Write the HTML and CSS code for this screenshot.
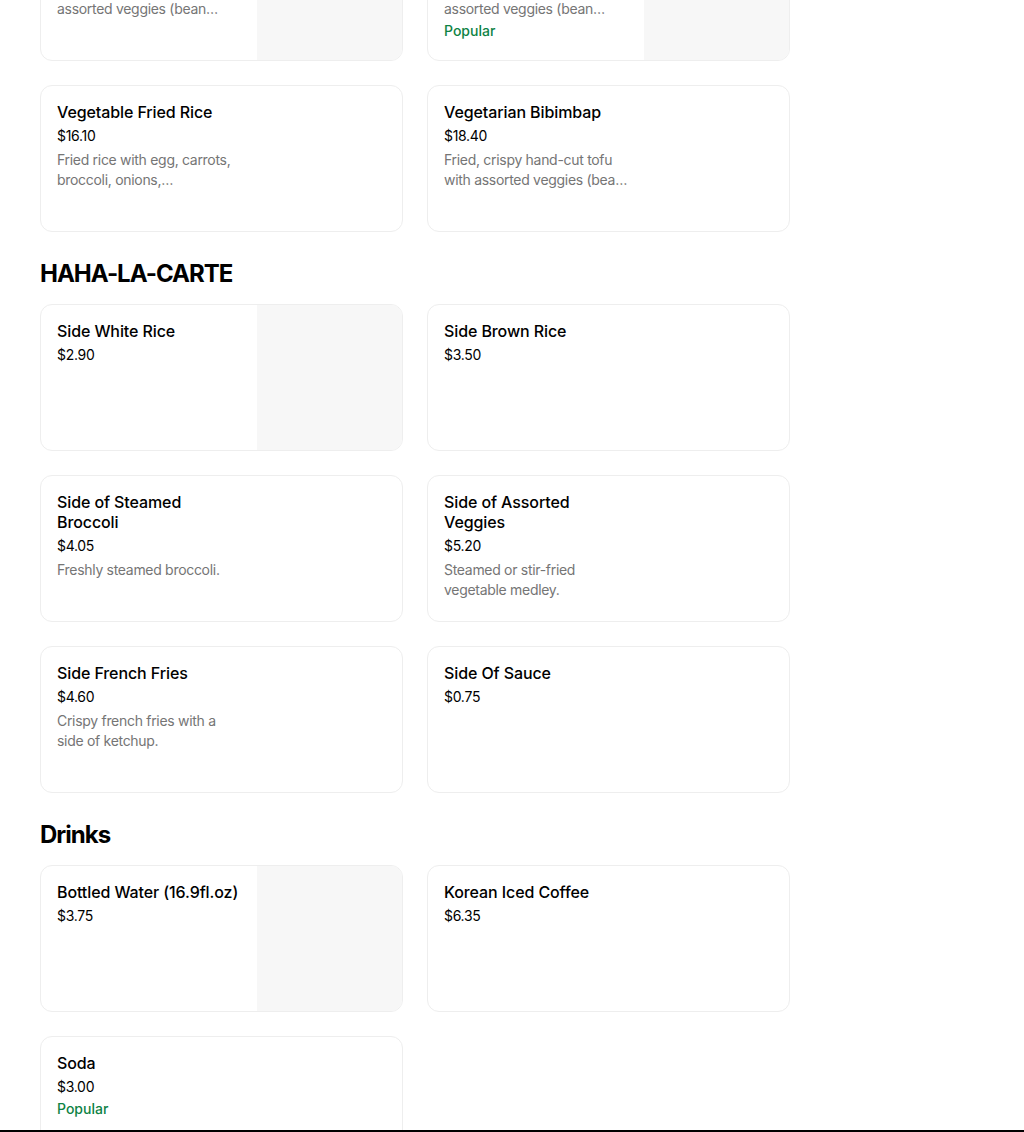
FILE: index.html
```html
<!DOCTYPE html>
<html lang="en">
  <head>
    <meta charset="UTF-8" />
    <meta name="viewport" content="width=device-width, initial-scale=1.0" />
    <title>Menu</title>
    <link rel="stylesheet" href="styles.css">
  </head>
  <body>
    <main class="menu">
      <section class="section">
        <div class="grid">
          <div class="card">
            <div class="info">
              <h4 class="name">Spicy Tofu Bowl</h4>
              <p class="price">$17.25</p>
              <p class="desc">Spicy tofu over rice, with assorted veggies (bean…</p>
            </div>
            <div class="thumb"></div>
          </div>
          <div class="card">
            <div class="info">
              <h4 class="name">Tofu Bibimbap</h4>
              <p class="price">$18.40</p>
              <p class="desc">Soft tofu over rice, with assorted veggies (bean…</p>
              <p class="tag">Popular</p>
            </div>
            <div class="thumb"></div>
          </div>
          <div class="card">
            <div class="info">
              <h4 class="name">Vegetable Fried Rice</h4>
              <p class="price">$16.10</p>
              <p class="desc">Fried rice with egg, carrots, broccoli, onions,…</p>
            </div>
          </div>
          <div class="card">
            <div class="info">
              <h4 class="name">Vegetarian Bibimbap</h4>
              <p class="price">$18.40</p>
              <p class="desc">Fried, crispy hand-cut tofu with assorted veggies (bea…</p>
            </div>
          </div>
        </div>
      </section>

      <section class="section">
        <h2 class="section-title">HAHA-LA-CARTE</h2>
        <div class="grid">
          <div class="card">
            <div class="info">
              <h4 class="name">Side White Rice</h4>
              <p class="price">$2.90</p>
            </div>
            <div class="thumb"></div>
          </div>
          <div class="card">
            <div class="info">
              <h4 class="name">Side Brown Rice</h4>
              <p class="price">$3.50</p>
            </div>
          </div>
          <div class="card">
            <div class="info">
              <h4 class="name">Side of Steamed Broccoli</h4>
              <p class="price">$4.05</p>
              <p class="desc">Freshly steamed broccoli.</p>
            </div>
          </div>
          <div class="card">
            <div class="info">
              <h4 class="name">Side of Assorted Veggies</h4>
              <p class="price">$5.20</p>
              <p class="desc">Steamed or stir-fried vegetable medley.</p>
            </div>
          </div>
          <div class="card">
            <div class="info">
              <h4 class="name">Side French Fries</h4>
              <p class="price">$4.60</p>
              <p class="desc">Crispy french fries with a side of ketchup.</p>
            </div>
          </div>
          <div class="card">
            <div class="info">
              <h4 class="name">Side Of Sauce</h4>
              <p class="price">$0.75</p>
            </div>
          </div>
        </div>
      </section>

      <section class="section">
        <h2 class="section-title">Drinks</h2>
        <div class="grid">
          <div class="card">
            <div class="info">
              <h4 class="name">Bottled Water (16.9fl.oz)</h4>
              <p class="price">$3.75</p>
            </div>
            <div class="thumb"></div>
          </div>
          <div class="card">
            <div class="info">
              <h4 class="name">Korean Iced Coffee</h4>
              <p class="price">$6.35</p>
            </div>
          </div>
          <div class="card">
            <div class="info">
              <h4 class="name">Soda</h4>
              <p class="price">$3.00</p>
              <p class="tag">Popular</p>
            </div>
          </div>
        </div>
      </section>
    </main>
    <div class="bottom-bar"></div>
  </body>
</html>
```

FILE: styles.css
```css
* {
  padding: 0;
  margin: 0;
  box-sizing: border-box;
}
html {
  font-size: 16px;
  font-family: Inter, 'Noto Sans', sans-serif;
  color: #000;
  background-color: #fff;
}
body {
  background-color: #fff;
  min-height: 100vh;
  overflow: hidden;
}
.menu {
  width: 790px;
  padding-left: 40px;
  margin-top: -86px;
}
.section + .section {
  margin-top: 24px;
}
.section-title {
  font-size: 24px;
  line-height: 36px;
  font-weight: 700;
  letter-spacing: -1px;
  margin-bottom: 12px;
}
.grid {
  display: grid;
  grid-template-columns: 1fr 1fr;
  gap: 24px;
}
.card {
  display: flex;
  height: 147px;
  border: 1px solid #eeeeee;
  border-radius: 12px;
  overflow: hidden;
  background-color: #fff;
}
.info {
  width: 216px;
  flex-shrink: 0;
  padding: 16px;
}
.name {
  font-size: 16px;
  line-height: 20px;
  font-weight: 500;
  letter-spacing: -0.1px;
}
.price {
  margin-top: 4px;
  font-size: 14px;
  line-height: 20px;
  letter-spacing: -0.3px;
}
.desc {
  margin-top: 4px;
  font-size: 14px;
  line-height: 20px;
  letter-spacing: -0.3px;
  color: #757575;
  display: -webkit-box;
  -webkit-line-clamp: 2;
  -webkit-box-orient: vertical;
  overflow: hidden;
}
.tag {
  margin-top: 2px;
  font-size: 14px;
  line-height: 20px;
  font-weight: 500;
  color: #0e8345;
}
.thumb {
  margin-left: auto;
  width: 146px;
  background-color: #f7f7f7;
}
.bottom-bar {
  position: fixed;
  left: 0;
  right: 0;
  bottom: 0;
  height: 2px;
  background-color: #000;
}
```
